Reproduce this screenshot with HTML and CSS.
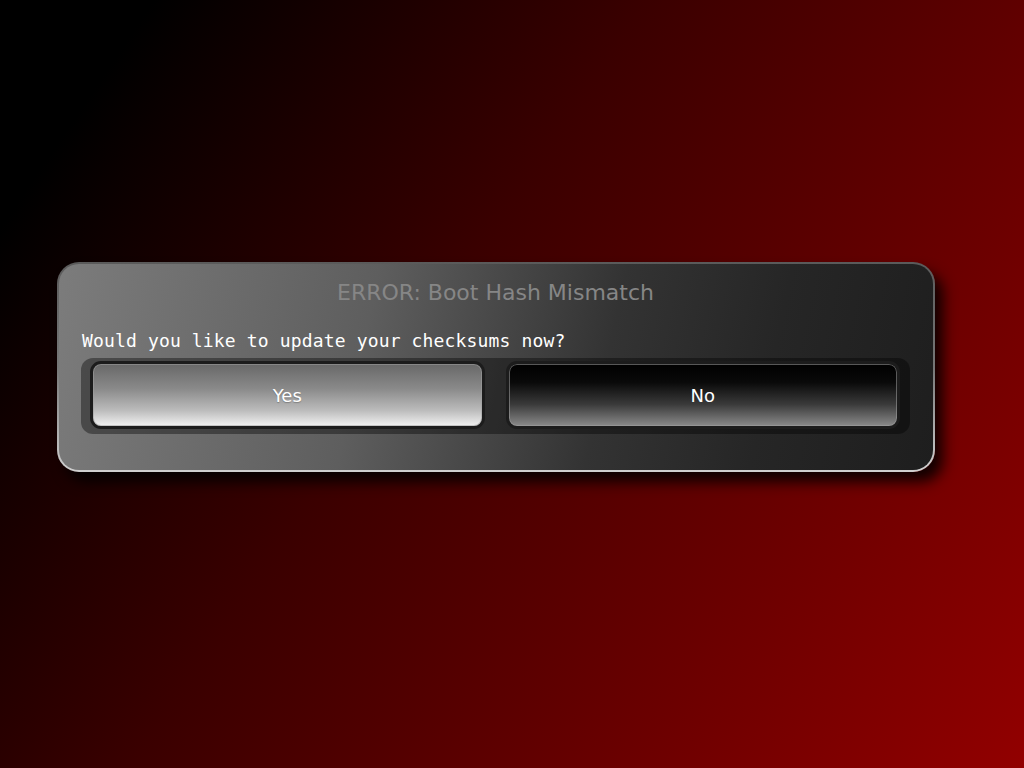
FILE: index.html
```html
<!DOCTYPE html>
<html>
<head>
<meta charset="utf-8">
<link rel="stylesheet" href="styles.css">
</head>
<body>
<div class="screen">
  <div class="dialog">
    <div class="title">ERROR: Boot Hash Mismatch</div>
    <div class="message">Would you like to update your checksums now?</div>
    <div class="choices">
      <button class="btn btn-yes">Yes</button>
      <button class="btn btn-no">No</button>
    </div>
  </div>
</div>
</body>
</html>
```
FILE: styles.css
```css
html, body {
  margin: 0;
  padding: 0;
  width: 1024px;
  height: 768px;
  overflow: hidden;
}
.screen {
  width: 1024px;
  height: 768px;
  background: linear-gradient(124deg, #000 10%, #3a0000 42%, #680000 72%, #920000 100%);
  padding-top: 262px;
  padding-left: 57px;
  box-sizing: border-box;
}
.dialog {
  width: 878px;
  height: 210px;
  box-sizing: border-box;
  border: 2px solid transparent;
  border-radius: 22px;
  background:
    linear-gradient(102deg, #7c7c7c 0%, #5e5e5e 35%, #333 62%, #262626 80%, #1e1e1e 100%) padding-box,
    linear-gradient(to bottom, #5a5a5a 0%, #777 50%, #d0d0d0 100%) border-box;
  box-shadow: 8px 10px 14px rgba(0,0,0,0.85);
  padding: 15px 23px 0 22px;
  display: flex;
  flex-direction: column;
}
.title {
  font-family: "DejaVu Sans", sans-serif;
  font-size: 22px;
  line-height: 28px;
  color: #868686;
  text-align: center;
}
.message {
  margin-top: 23px;
  font-family: "DejaVu Sans Mono", monospace;
  font-size: 18px;
  letter-spacing: 0.15px;
  line-height: 22px;
  color: #fff;
  padding-left: 1px;
}
.choices {
  margin-top: 6px;
  height: 76px;
  box-sizing: border-box;
  border-radius: 12px;
  background: rgba(0,0,0,0.38);
  padding: 3px 10px 5px 9px;
  display: flex;
  gap: 21px;
}
.btn {
  flex: 1;
  border: 3px solid #1c1c1c;
  border-radius: 11px;
  font-family: "DejaVu Sans", sans-serif;
  font-size: 18px;
  color: #fff;
  padding: 0;
  box-shadow: inset 0 0 0 1px rgba(160,160,160,0.55);
}
.btn-yes {
  background: linear-gradient(to bottom, #686868 0%, #8a8a8a 40%, #bcbcbc 75%, #f2f2f2 100%);
  text-shadow: 0 1px 1px rgba(0,0,0,0.25);
}
.btn-no {
  background: linear-gradient(to bottom, #000 0%, #0a0a0a 30%, #3a3a3a 65%, #8a8a8a 100%);
}
```
